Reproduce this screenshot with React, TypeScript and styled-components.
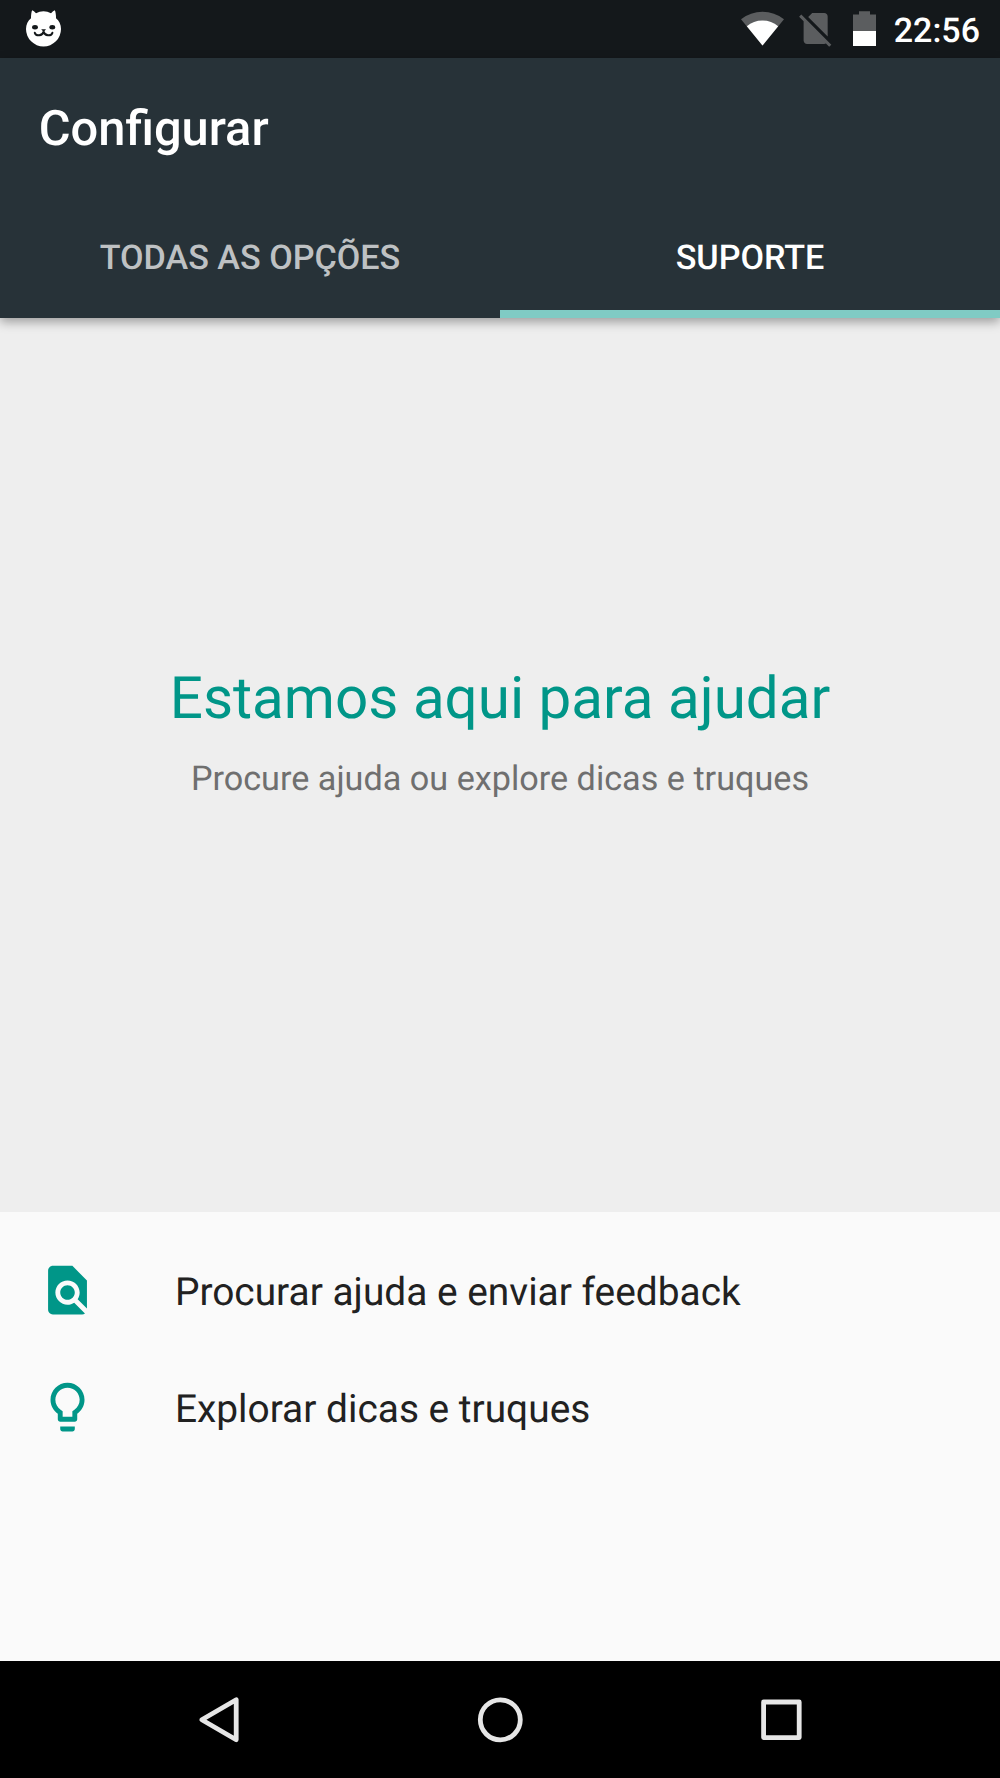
import React from "react";
import styled, { createGlobalStyle } from "styled-components";

const GlobalStyle = createGlobalStyle`
  *, *::before, *::after { box-sizing: border-box; }
  body {
    margin: 0;
    background: #000;
    font-family: Roboto, "Noto Sans", sans-serif;
    text-rendering: geometricPrecision;
  }
`;

const Screen = styled.div`
  display: flex;
  flex-direction: column;
  width: 1000px;
  height: 1778px;
  overflow: hidden;
  background: #fafafa;
`;

const StatusBar = styled.div`
  display: flex;
  align-items: flex-start;
  justify-content: space-between;
  height: 58px;
  padding: 0 20px 0 24px;
  flex: none;
  background: #14181b;
`;

const StatusIcons = styled.div`
  display: flex;
  align-items: flex-start;
`;

const StatusGlyph = styled.svg<{ $gap?: number }>`
  display: block;
  flex: none;
  margin-right: ${(p) => p.$gap ?? 0}px;
`;

const Clock = styled.span`
  font-size: 34px;
  font-weight: 500;
  line-height: 40px;
  padding-top: 11px;
  color: #fff;
`;

const Header = styled.header`
  position: relative;
  z-index: 1;
  display: flex;
  flex-direction: column;
  height: 260px;
  flex: none;
  background: #273238;
  box-shadow: 0 4px 10px rgba(0, 0, 0, 0.34);
`;

const Title = styled.h1`
  margin: 0;
  height: 141px;
  padding-left: 38.7px;
  font-size: 48.8px;
  font-weight: 500;
  line-height: 141px;
  color: #fff;
`;

const Tabs = styled.nav`
  display: grid;
  grid-template-columns: 1fr 1fr;
  flex: 1;
`;

const Tab = styled.button<{ $active?: boolean }>`
  display: flex;
  align-items: center;
  justify-content: center;
  padding: 6px 0 0;
  border: 0;
  border-bottom: 8px solid ${(p) => (p.$active ? "#80cbc4" : "transparent")};
  background: none;
  font-family: inherit;
  font-size: 34.15px;
  font-weight: 500;
  text-rendering: inherit;
  text-transform: uppercase;
  color: ${(p) => (p.$active ? "#fff" : "#bec1c3")};
`;

const Hero = styled.section`
  display: flex;
  flex-direction: column;
  align-items: center;
  height: 894px;
  padding-top: 347px;
  flex: none;
  background: #eee;
`;

const Headline = styled.h2`
  margin: 0;
  font-size: 58.35px;
  font-weight: 400;
  line-height: 68px;
  color: #009688;
`;

const Subline = styled.p`
  margin: 26px 0 0;
  font-size: 34.2px;
  line-height: 40px;
  color: #6f6f6f;
`;

const OptionList = styled.ul`
  list-style: none;
  margin: 0;
  padding: 20px 0 0;
  flex: 1;
`;

const Option = styled.li`
  display: flex;
  align-items: center;
  height: 116.7px;
  padding-left: 38px;
`;

const OptionIcon = styled.svg`
  display: block;
  width: 58.3px;
  height: 58.3px;
  flex: none;
  fill: #009688;
`;

const OptionLabel = styled.span`
  margin-left: 78.6px;
  padding-top: 6px;
  font-size: 38.87px;
  line-height: 46px;
  color: #212121;
`;

const NavBar = styled.nav`
  display: flex;
  justify-content: center;
  align-items: center;
  gap: 221px;
  height: 117px;
  flex: none;
  background: #000;
`;

const NavIcon = styled.svg`
  display: block;
  width: 60px;
  height: 60px;
  fill: none;
  stroke: #e6e6e6;
  stroke-width: 4.8;
  stroke-linejoin: round;
`;

const CatIcon = () => (
  <StatusGlyph width="40" height="52" viewBox="24 0 40 52">
    <path
      fill="#fff"
      d="M32.2 10.2Q33.8 10.8 36 13.3Q39.5 11.3 43.5 11.3Q47.5 11.3 51 13.3Q53.2 10.8 54.8 10.2Q56 12.5 56 18.2C59 20.5 61 24.5 61 29A17.5 17.5 0 0 1 26 29C26 24.5 28 20.5 31 18.2Q31 12.5 32.2 10.2Z"
    />
    <ellipse cx="35" cy="27.3" rx="2.9" ry="2.2" fill="#14181b" />
    <ellipse cx="52.3" cy="27.3" rx="2.9" ry="2.2" fill="#14181b" />
    <path d="M41.2 29.2h4.8l-2.4 2.8z" fill="#14181b" />
    <path
      d="M34.8 32.8C36.2 36.4 42.4 36.4 43.6 31.4C44.8 36.4 51 36.4 52.4 32.8"
      fill="none"
      stroke="#14181b"
      strokeWidth="2"
      strokeLinecap="round"
    />
  </StatusGlyph>
);

const WifiIcon = () => (
  <StatusGlyph width="43" height="48" viewBox="741.5 0 43 48" $gap={11}>
    <path fill="#5b5d5f" d="M741.5 19.3Q751 11.8 763 11.8Q775 11.8 784.5 19.3L763 45.6Z" />
    <path fill="#fff" d="M747.3 26.3Q754 20.6 763 20.6Q772 20.6 778.7 26.3L763 45.6Z" />
  </StatusGlyph>
);

const NoSimIcon = () => (
  <StatusGlyph width="41.3" height="49.2" viewBox="0 -4.6 24 28.6" $gap={16.7}>
    <path
      fill="#5b5d5f"
      d="M18.99 5c0-1.1-.89-2-1.99-2h-7L7.66 5.34 19 16.68 18.99 5zM3.65 3.88L2.38 5.15 5 7.77V19c0 1.1.9 2 2 2h10.01c.35 0 .67-.1.96-.26l1.88 1.88 1.27-1.27L3.65 3.88z"
    />
  </StatusGlyph>
);

const BatteryIcon = () => (
  <StatusGlyph width="23" height="48" viewBox="0 0 23 48" $gap={17.5}>
    <path fill="#5b5d5f" d="M6 11.2h11v3.4h6V31H0V14.6h6z" />
    <path fill="#fff" d="M0 31h23v15H0z" />
  </StatusGlyph>
);

const options = [
  {
    label: "Procurar ajuda e enviar feedback",
    path: "M20 19.59V8l-6-6H6c-1.1 0-1.99.9-1.99 2L4 20c0 1.1.89 2 1.99 2H18c.45 0 .85-.15 1.19-.4l-4.43-4.43c-.8.52-1.74.83-2.76.83-2.76 0-5-2.24-5-5s2.24-5 5-5 5 2.24 5 5c0 1.02-.31 1.96-.83 2.75L20 19.59zM9 13c0 1.66 1.34 3 3 3s3-1.34 3-3-1.34-3-3-3-3 1.34-3 3z",
  },
  {
    label: "Explorar dicas e truques",
    path: "M9 21c0 .55.45 1 1 1h4c.55 0 1-.45 1-1v-1H9v1zm3-19C8.14 2 5 5.14 5 9c0 2.38 1.19 4.47 3 5.74V17c0 .55.45 1 1 1h6c.55 0 1-.45 1-1v-2.26c1.81-1.27 3-3.36 3-5.74 0-3.86-3.14-7-7-7zm2.85 11.1l-.85.6V16h-4v-2.3l-.85-.6C7.8 12.16 7 10.63 7 9c0-2.76 2.24-5 5-5s5 2.24 5 5c0 1.63-.8 3.16-2.15 4.1z",
  },
];

export default function App() {
  return (
    <Screen>
      <GlobalStyle />
      <StatusBar>
        <CatIcon />
        <StatusIcons>
          <WifiIcon />
          <NoSimIcon />
          <BatteryIcon />
          <Clock>22:56</Clock>
        </StatusIcons>
      </StatusBar>
      <Header>
        <Title>Configurar</Title>
        <Tabs>
          <Tab>Todas as opções</Tab>
          <Tab $active>Suporte</Tab>
        </Tabs>
      </Header>
      <Hero>
        <Headline>Estamos aqui para ajudar</Headline>
        <Subline>Procure ajuda ou explore dicas e truques</Subline>
      </Hero>
      <OptionList>
        {options.map((o) => (
          <Option key={o.label}>
            <OptionIcon viewBox="-0.15 0 24 24">
              <path d={o.path} />
            </OptionIcon>
            <OptionLabel>{o.label}</OptionLabel>
          </Option>
        ))}
      </OptionList>
      <NavBar>
        <NavIcon viewBox="0 0 60 60">
          <path d="M12.8 29.8L47.2 9.8V49.8Z" />
        </NavIcon>
        <NavIcon viewBox="0 0 60 60">
          <circle cx="30.3" cy="29.8" r="20" />
        </NavIcon>
        <NavIcon viewBox="0 0 60 60">
          <path d="M12.6 12h35.6v35.6h-35.6z" />
        </NavIcon>
      </NavBar>
    </Screen>
  );
}
